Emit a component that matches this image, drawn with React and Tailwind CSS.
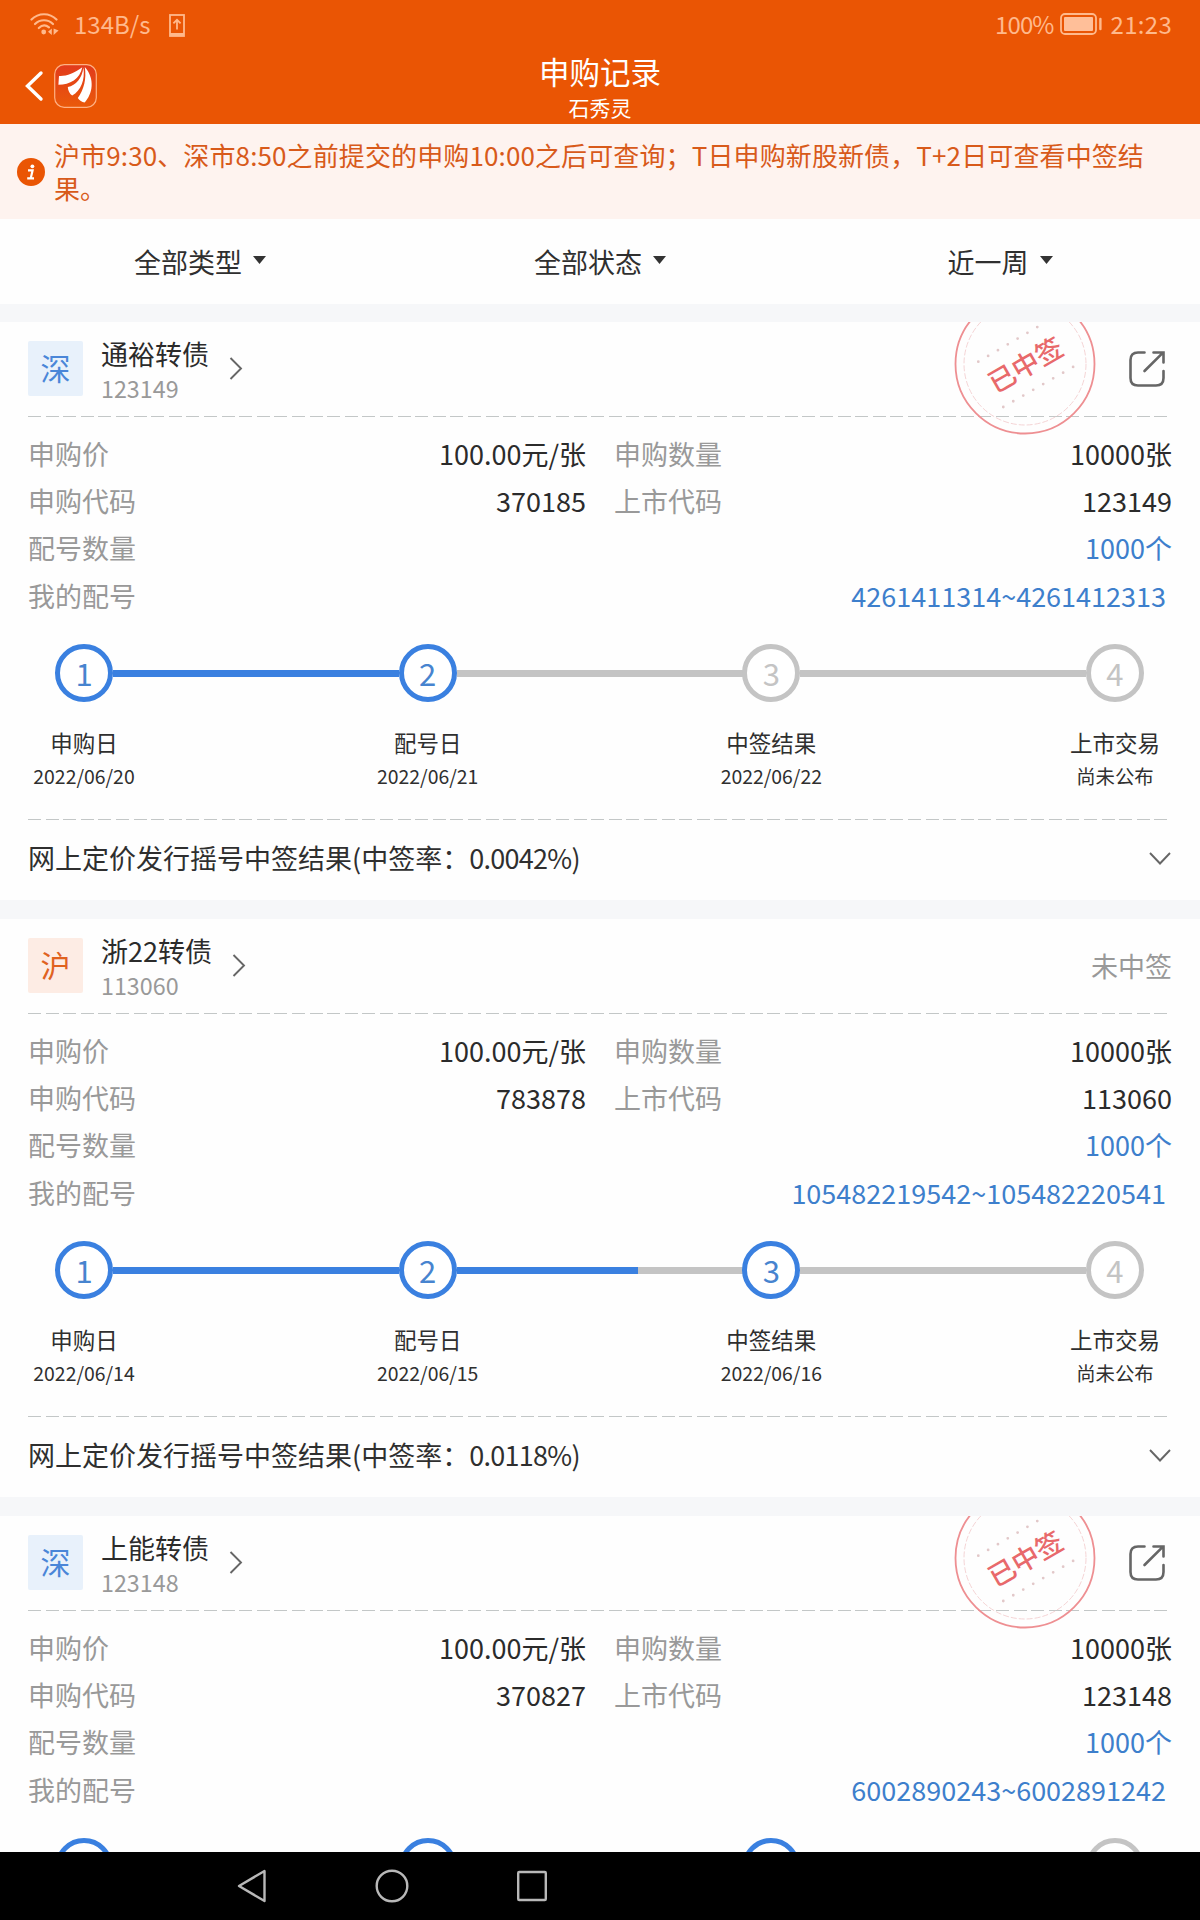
import React from "react";
import clsx from "clsx";

const records = [
  {
    id: 1,
    market: "深",
    name: "通裕转债",
    code: "123149",
    won: true,
    applyCode: "370185",
    range: "4261411314~4261412313",
    rate: "0.0042%",
    reached: 2,
    partial: 0,
    dates: ["2022/06/20", "2022/06/21", "2022/06/22", "尚未公布"],
  },
  {
    id: 2,
    market: "沪",
    name: "浙22转债",
    code: "113060",
    won: false,
    applyCode: "783878",
    range: "105482219542~105482220541",
    rate: "0.0118%",
    reached: 3,
    partial: 63.5,
    dates: ["2022/06/14", "2022/06/15", "2022/06/16", "尚未公布"],
  },
  {
    id: 3,
    market: "深",
    name: "上能转债",
    code: "123148",
    won: true,
    applyCode: "370827",
    range: "6002890243~6002891242",
    reached: 3,
    partial: 63.5,
  },
];

const stepNames = ["申购日", "配号日", "中签结果", "上市交易"];
const filters = ["全部类型", "全部状态", "近一周"];

function StatusBar() {
  return (
    <div className="flex h-[50px] items-center justify-between pl-[30px] pr-[28px] text-[24px] leading-none text-[#ffb98c]">
      <div className="flex items-center">
        <svg width="29" height="24" viewBox="0 0 29 24" fill="none" stroke="currentColor" strokeWidth="2.2" strokeLinecap="round">
          <path d="M1.5 6.5 C8.5 -0.5 19.5 -0.5 26.5 6.5" />
          <path d="M5 11 C10 6 18 6 23 11" />
          <path d="M8.8 15 C12 12 16 12 19 14.4" />
          <circle cx="13.7" cy="19" r="2.4" fill="currentColor" stroke="none" />
          <path d="M21.8 15.5 V22 L18 18.8 Z M23.6 15.5 V22 L28.6 17.4 Z" fill="currentColor" stroke="none" />
        </svg>
        <span className="mb-[3px] ml-[15px]">134B/s</span>
        <svg className="ml-[19px]" width="16" height="23" viewBox="0 0 16 23" fill="none" stroke="currentColor">
          <rect x="1" y="1" width="14" height="21" strokeWidth="1.8" />
          <path d="M1 20.5 H15" strokeWidth="3" />
          <path d="M8 15.5 V6 M4.4 9.4 L8 5.8 L11.6 9.4" strokeWidth="1.8" />
        </svg>
      </div>
      <div className="flex items-center">
        <span className="mb-[3px] tracking-[-0.9px]">100%</span>
        <svg className="mb-[2px] ml-[6px]" width="43" height="22" viewBox="0 0 43 22" fill="none">
          <rect x="1" y="1" width="35" height="20" rx="4" stroke="currentColor" strokeWidth="1.8" />
          <rect x="4" y="4" width="29" height="14" rx="1" fill="#ffbf99" />
          <path d="M40.4 6 V16" stroke="currentColor" strokeWidth="2.4" strokeLinecap="round" />
        </svg>
        <span className="mb-[3px] ml-[8px] tracking-[0.3px]">21:23</span>
      </div>
    </div>
  );
}

function AppLogo() {
  return (
    <svg width="43" height="44" viewBox="0 0 43 44">
      <defs>
        <linearGradient id="logoBg" x1="0" y1="0" x2="0" y2="1">
          <stop offset="0" stopColor="#e23a1c" />
          <stop offset="1" stopColor="#ea5a0a" />
        </linearGradient>
      </defs>
      <rect x="0.7" y="0.7" width="41.6" height="42.6" rx="9.5" fill="url(#logoBg)" stroke="#ffb184" strokeWidth="1.2" />
      <g fill="#fff">
        <path d="M28.3 3.3 C20 9.5 12 12.5 5 12 L4.4 20.8 C16 20.8 26 15 28.3 3.3 Z" />
        <path d="M29.4 3.5 C28 14.5 22 21.5 13.8 23 C14 26.5 15.4 29.6 18.2 31.6 C27 26.5 31.2 16 29.4 3.5 Z" />
        <path d="M30.8 3 C32.6 15 30 25.5 23.8 34 C25.6 36.6 27.8 38 30.6 38.6 C38.6 30 41.4 15 30.8 3 Z" />
      </g>
    </svg>
  );
}

function Header() {
  return (
    <header className="h-[124px] shrink-0 bg-[#ea5504] text-white">
      <StatusBar />
      <div className="grid h-[74px] grid-cols-[1fr_auto_1fr]">
        <div className="flex items-start pl-[25px] pt-[14px]">
          <svg className="mt-[6px]" width="19" height="32" viewBox="0 0 19 32" fill="none" stroke="currentColor" strokeWidth="3.4" strokeLinecap="round">
            <path d="M16 3 L2.5 16 L16 29" />
          </svg>
          <div className="ml-[10px]">
            <AppLogo />
          </div>
        </div>
        <div className="pt-px text-center">
          <h1 className="text-[30.5px] leading-[40px]">申购记录</h1>
          <p className="text-[21px] leading-[33px]">石秀灵</p>
        </div>
      </div>
    </header>
  );
}

function Notice() {
  return (
    <div className="flex h-[95px] shrink-0 items-center bg-[#fef3ef] pl-[17px] text-[#d85a1a]">
      <svg className="shrink-0" width="28" height="28" viewBox="0 0 28 28">
        <circle cx="14" cy="14" r="14" fill="#ea5504" />
        <circle cx="15.4" cy="8.3" r="1.9" fill="#fff" />
        <path d="M11 12.4 H15.6 L13.8 20 M10.2 20.4 H17" fill="none" stroke="#fff" strokeWidth="2.2" />
      </svg>
      <p className="ml-[9px] w-[1106px] pb-[2px] text-[26px] leading-[33px] tracking-[0.12px]">
        沪市9:30、深市8:50之前提交的申购10:00之后可查询；T日申购新股新债，T+2日可查看中签结果。
      </p>
    </div>
  );
}

function Filters() {
  return (
    <div className="grid h-[85px] shrink-0 grid-cols-3 bg-[#fefefe]">
      {filters.map((label) => (
        <div key={label} className="flex items-center justify-center gap-[11px] pt-px text-[27px] text-[#2f2f2f]">
          <span className="leading-[40px]">{label}</span>
          <svg className="mb-[5px]" width="13" height="8" viewBox="0 0 13 8">
            <path d="M0 0 H13 L6.5 8 Z" fill="#333" />
          </svg>
        </div>
      ))}
    </div>
  );
}

function Divider() {
  return (
    <div className="mx-[28px] h-px bg-[repeating-linear-gradient(90deg,#c3c7c7_0px,#c3c7c7_13px,transparent_13px,transparent_17.6px)]" />
  );
}

function Stamp() {
  return (
    <div className="absolute left-[953.5px] top-[-29.5px] h-[142px] w-[142px]">
      <svg className="absolute inset-0" width="142" height="142" viewBox="0 0 142 142" fill="none">
        <circle cx="71" cy="71" r="69.5" stroke="#ee8f92" strokeWidth="1.8" />
        <circle cx="71" cy="71" r="61" stroke="#f3cfd0" strokeWidth="0.9" strokeDasharray="6 2" />
        <path d="M24.3 68.7 L84 33.6" stroke="#e2c8c9" strokeWidth="2.8" strokeLinecap="round" strokeDasharray="0 11.4" />
        <path d="M49.3 114 L120 73.4" stroke="#e2c8c9" strokeWidth="2.8" strokeLinecap="round" strokeDasharray="0 11.5" />
      </svg>
      <div className="flex h-full -rotate-[30deg] items-center justify-center text-[27px] font-medium text-[#e8696b]">
        已中签
      </div>
    </div>
  );
}

function ShareIcon() {
  return (
    <svg width="36" height="36" viewBox="0 0 36 36" fill="none" stroke="#666" strokeWidth="2.6" strokeLinecap="round">
      <path d="M15.5 1.5 H9 C4 1.5 1.5 4 1.5 9 V27 C1.5 32 4 34.5 9 34.5 H27 C32 34.5 34.5 32 34.5 27 V20" />
      <path d="M15.5 20 L33.5 2.2 M24.5 1.5 H34.5 V11.5" />
    </svg>
  );
}

function Row({ label, value, blue, className }) {
  return (
    <div className={clsx("flex h-[47.3px] items-center justify-between", className)}>
      <span className="text-[#999]">{label}</span>
      <span className={blue ? "text-[#3d7fcc]" : "text-[#2b2b2b]"}>{value}</span>
    </div>
  );
}

function Steps({ reached, partial, dates }) {
  return (
    <div className="mt-[25px] flex justify-between pl-[12px] pr-[13px]">
      {stepNames.map((name, i) => {
        const active = i < reached;
        const next = i + 1 < reached;
        // The last reached segment is only filled part of the way
        const fill = !next ? 0 : i + 2 === reached && partial ? partial : 100;
        return (
          <div key={name} className="relative flex w-[144px] shrink-0 flex-col items-center">
            {i < 3 && (
              <div className="absolute left-[101px] top-[26px] h-[7px] w-[286px] bg-[#c4c4c4]">
                <div className="h-full bg-[#3a80e0]" style={{ width: `${fill}%` }} />
              </div>
            )}
            <div
              className={clsx(
                "flex h-[58px] w-[58px] items-center justify-center rounded-full border-[5.5px] bg-white pb-[2px] text-[31px] leading-none",
                active ? "border-[#3a80e0] text-[#4784cf]" : "border-[#c4c4c4] text-[#c4c4c4]"
              )}
            >
              {i + 1}
            </div>
            {dates && (
              <>
                <div className="mt-[23px] text-[22.5px] leading-[34px] text-[#2f2f2f]">{name}</div>
                <div className="text-[19.4px] leading-[34px] text-[#2f2f2f]">{dates[i]}</div>
              </>
            )}
          </div>
        );
      })}
    </div>
  );
}

function RecordCard({ record }) {
  const shen = record.market === "深";
  return (
    <section className="relative h-[578px] shrink-0 overflow-hidden bg-[#fefefe]">
      <div className="flex h-[94px] items-start pl-[28px] pr-[28px] pt-[19px]">
        <div
          className={clsx(
            "flex h-[55px] w-[55px] items-center justify-center rounded-[2px] pb-[3px] text-[30px] leading-none",
            shen ? "bg-[#e8f1fb] text-[#4a86d8]" : "bg-[#fdece4] text-[#e0621f]"
          )}
        >
          {record.market}
        </div>
        <div className="ml-[18px] -mt-[6.5px]">
          <div className="text-[27px] leading-[38px] text-[#2b2b2b]">{record.name}</div>
          <div className="text-[23.3px] leading-[30px] text-[#999]">{record.code}</div>
        </div>
        <svg className="ml-[20px] mt-[16px]" width="14" height="23" viewBox="0 0 14 23" fill="none" stroke="#666" strokeWidth="1.9">
          <path d="M1.5 1 L12 11.5 L1.5 22" />
        </svg>
        <div className="ml-auto">
          {record.won ? (
            <div className="mr-[7px] mt-[10px]">
              <ShareIcon />
            </div>
          ) : (
            <div className="mt-[8px] text-[27px] leading-[40px] text-[#999]">未中签</div>
          )}
        </div>
      </div>
      <Divider />
      {record.won && <Stamp />}

      <div className="px-[28px] pt-[13px] text-[27px] leading-[40px]">
        <div className="grid grid-cols-2 gap-x-[28px]">
          <Row label="申购价" value="100.00元/张" />
          <Row label="申购数量" value="10000张" />
          <Row label="申购代码" value={record.applyCode} />
          <Row label="上市代码" value={record.code} />
        </div>
        <Row label="配号数量" value="1000个" blue />
        <Row label="我的配号" value={record.range} blue className="pr-[6px]" />
      </div>

      <Steps reached={record.reached} partial={record.partial} dates={record.dates} />

      {record.rate && (
        <>
          <div className="mt-[26px]">
            <Divider />
          </div>
          <div className="flex h-[77px] items-center justify-between pl-[28px] pr-[29px] text-[27px] text-[#2f2f2f]">
            <span>
              网上定价发行摇号中签结果(中签率：<span className="tracking-[-0.7px]">{record.rate})</span>
            </span>
            <svg width="22" height="13" viewBox="0 0 22 13" fill="none" stroke="#666" strokeWidth="1.9">
              <path d="M1 1 L11 11.5 L21 1" />
            </svg>
          </div>
        </>
      )}
    </section>
  );
}

function NavBar() {
  return (
    <nav className="flex h-[68px] shrink-0 items-center bg-black pl-[236px]">
      <svg width="312" height="36" viewBox="0 0 312 36" fill="none" stroke="#b8b8b8" strokeWidth="2.4" strokeLinejoin="round">
        <path d="M28.5 3 V33 L3 18 Z" />
        <circle cx="156" cy="18" r="15.3" />
        <rect x="282.2" y="4" width="27.6" height="28" rx="1" />
      </svg>
    </nav>
  );
}

export default function App() {
  return (
    <div className="flex h-[1920px] w-[1200px] flex-col overflow-hidden bg-[#f6f7f9] font-['Noto_Sans_CJK_SC',sans-serif]">
      <Header />
      <Notice />
      <Filters />
      <main className="flex min-h-0 flex-1 flex-col gap-[19px] overflow-hidden pt-[18px]">
        {records.map((record) => (
          <RecordCard key={record.id} record={record} />
        ))}
      </main>
      <NavBar />
    </div>
  );
}
